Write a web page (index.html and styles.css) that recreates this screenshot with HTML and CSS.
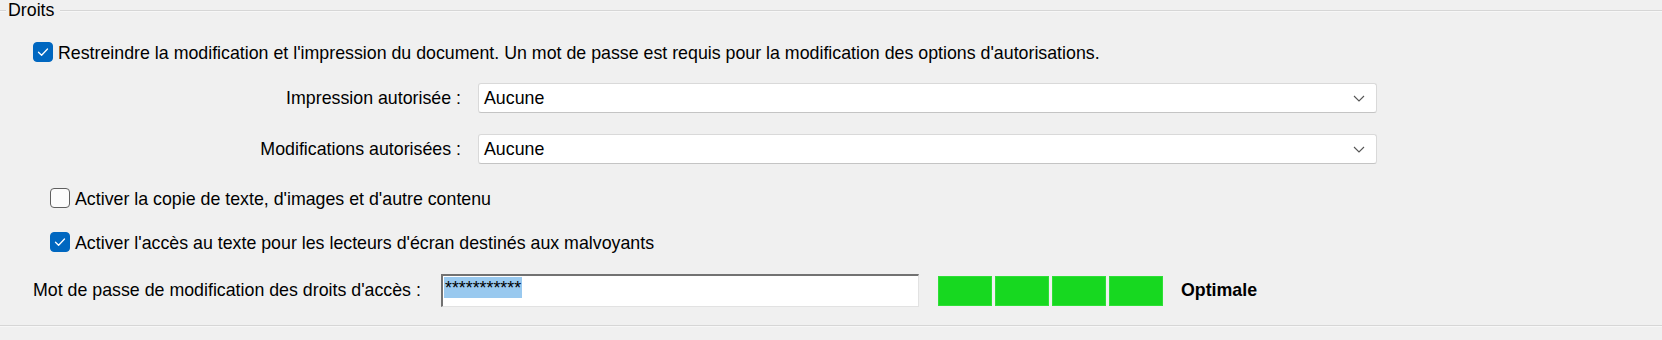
FILE: index.html
```html
<!DOCTYPE html>
<html lang="fr">
<head>
<meta charset="utf-8">
<link rel="stylesheet" href="styles.css">
</head>
<body>
<div class="panel">
  <div class="legend">
    <div class="rule rule-short"></div>
    <span class="legend-text">Droits</span>
    <div class="rule rule-long"></div>
  </div>

  <div class="check-row row-main">
    <span class="cb checked"><svg viewBox="0 0 20 20" width="20" height="20"><path d="M5.5 10.2 L8.6 13.2 L14.5 7" fill="none" stroke="#fff" stroke-width="1.3" stroke-linecap="round" stroke-linejoin="round"/></svg></span>
    <span class="cb-label">Restreindre la modification et l'impression du document. Un mot de passe est requis pour la modification des options d'autorisations.</span>
  </div>

  <div class="select-grid">
    <span class="field-label">Impression autorisée :</span>
    <div class="select"><span>Aucune</span><svg class="chev" viewBox="0 0 12 7" width="12" height="7"><path d="M1 1 L6 6 L11 1" fill="none" stroke="#555" stroke-width="1.1"/></svg></div>
    <span class="field-label">Modifications autorisées :</span>
    <div class="select"><span>Aucune</span><svg class="chev" viewBox="0 0 12 7" width="12" height="7"><path d="M1 1 L6 6 L11 1" fill="none" stroke="#555" stroke-width="1.1"/></svg></div>
  </div>

  <div class="check-row row-sub row-copy">
    <span class="cb"></span>
    <span class="cb-label">Activer la copie de texte, d'images et d'autre contenu</span>
  </div>

  <div class="check-row row-sub row-access">
    <span class="cb checked"><svg viewBox="0 0 20 20" width="20" height="20"><path d="M5.5 10.2 L8.6 13.2 L14.5 7" fill="none" stroke="#fff" stroke-width="1.3" stroke-linecap="round" stroke-linejoin="round"/></svg></span>
    <span class="cb-label">Activer l'accès au texte pour les lecteurs d'écran destinés aux malvoyants</span>
  </div>

  <div class="pw-row">
    <span class="pw-label">Mot de passe de modification des droits d'accès :</span>
    <div class="pw-input"><span class="sel">***********</span></div>
    <div class="strength">
      <span class="seg"></span><span class="seg"></span><span class="seg"></span><span class="seg"></span>
    </div>
    <span class="strength-text">Optimale</span>
  </div>

  <div class="bottom-rule"></div>
</div>
</body>
</html>
```

FILE: styles.css
```css
html, body {
  margin: 0;
  padding: 0;
  background: #f0f0f0;
}
body {
  font-family: "Liberation Sans", Arial, sans-serif;
  font-size: 17.8px;
  color: #000;
  width: 1662px;
  height: 340px;
  overflow: hidden;
}
.panel {
  display: flex;
  flex-direction: column;
}
.legend {
  display: flex;
  align-items: center;
  height: 21px;
}
.rule {
  height: 1px;
  background: #d6d6d6;
  box-shadow: 0 1px 0 #f7f7f7;
}
.rule-short { width: 6px; }
.rule-long { flex: 1; margin-left: 4px; }
.legend-text {
  padding: 0 2px;
  line-height: 21px;
  margin-top: -1px;
}
.check-row {
  display: flex;
  align-items: center;
  height: 20px;
  gap: 5px;
}
.row-main { margin-top: 21px; padding-left: 33px; }
.row-sub { padding-left: 50px; }
.row-copy { margin-top: 24px; }
.row-access { margin-top: 24px; }
.cb {
  width: 20px;
  height: 20px;
  box-sizing: border-box;
  border-radius: 4px;
  border: 1px solid #5f5f5f;
  background: #fbfbfb;
  display: flex;
  flex-shrink: 0;
}
.cb.checked {
  background: #0067c0;
  border-color: #0067c0;
}
.cb.checked svg { margin: -1px; }
.cb-label { white-space: nowrap; line-height: 20px; padding-top: 1px; }
.select-grid {
  display: grid;
  grid-template-columns: 461px 899px;
  column-gap: 17px;
  row-gap: 21px;
  margin-top: 21px;
  align-items: center;
}
.field-label { text-align: right; white-space: nowrap; padding-top: 1px; }
.select {
  height: 30px;
  box-sizing: border-box;
  background: #fff;
  border: 1px solid #d9d9d9;
  border-bottom-color: #c4c4c4;
  border-radius: 3px;
  display: flex;
  align-items: center;
  justify-content: space-between;
  padding: 0 11px 0 5px;
}
.chev { display: block; }
.pw-row {
  display: flex;
  align-items: center;
  margin-top: 22px;
  padding-left: 33px;
  height: 33px;
}
.pw-label {
  width: 408px;
  white-space: nowrap;
  flex-shrink: 0;
}
.pw-input {
  width: 478px;
  height: 33px;
  box-sizing: border-box;
  background: #fff;
  border-style: solid;
  border-width: 2px 1px 1px 2px;
  border-color: #727272 #e2e2e2 #e2e2e2 #727272;
  padding: 1px 0 0 1px;
  display: flex;
  align-items: flex-start;
}
.sel {
  background: #99c9ef;
  height: 21px;
  line-height: 22px;
  font-size: 17.8px;
  padding: 0 1px;
}
.strength {
  display: flex;
  gap: 3px;
  margin-left: 19px;
}
.seg {
  width: 54px;
  height: 30px;
  background: #17d820;
  box-shadow: inset 0 0 0 1px #2ee036;
}
.strength-text {
  font-weight: bold;
  margin-left: 18px;
}
.bottom-rule {
  margin-top: 18px;
  height: 1px;
  background: #d6d6d6;
  box-shadow: 0 1px 0 #f7f7f7;
}
```
